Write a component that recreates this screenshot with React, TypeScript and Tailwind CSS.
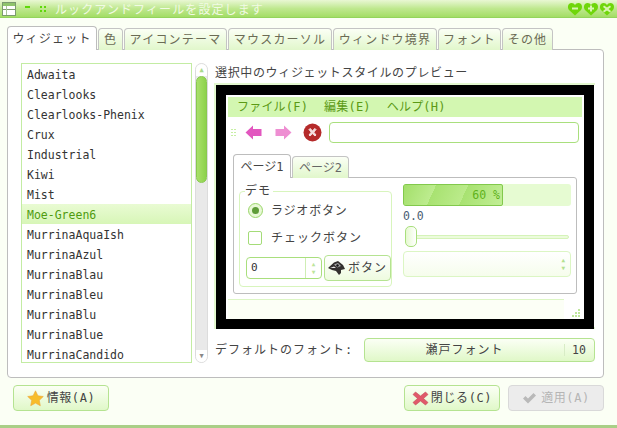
const themes = [
  'Adwaita',
  'Clearlooks',
  'Clearlooks-Phenix',
  'Crux',
  'Industrial',
  'Kiwi',
  'Mist',
  'Moe-Green6',
  'MurrinaAquaIsh',
  'MurrinaAzul',
  'MurrinaBlau',
  'MurrinaBleu',
  'MurrinaBlu',
  'MurrinaBlue',
  'MurrinaCandido',
];

const tabs = [
  { label: '色', width: 'w-[25px]' },
  { label: 'アイコンテーマ', width: 'w-[103px]' },
  { label: 'マウスカーソル', width: 'w-[104px]' },
  { label: 'ウィンドウ境界', width: 'w-[104px]' },
  { label: 'フォント', width: 'w-[63px]' },
  { label: 'その他', width: 'w-[51px]' },
];

const fontStack = "font-['DejaVu_Sans_Mono','Noto_Sans_CJK_JP',monospace]";

function Heart({ mark }: { mark: string }) {
  return (
    <svg width="16" height="14" viewBox="0 0 15 14">
      <path d="M7.5 13.5 1.5 8C-.5 5.5.5 1 4 1c1.6 0 2.8.8 3.5 2C8.2 1.8 9.4 1 11 1c3.5 0 4.5 4.5 2.5 7z" fill="#6fd60a" />
      {mark === 'min' && <rect x="4.5" y="5.5" width="6" height="2" fill="#d8f5b0" />}
      {mark === 'max' && <path d="M6.5 3.5h2v2h2v2h-2v2h-2v-2h-2v-2h2z" fill="#d8f5b0" />}
      {mark === 'close' && <path d="m4.5 3.5 3 2 3-2 1 1.5-2.500 2 2.500 2-1 1.500-3-2-3 2-1-1.500 2.500-2-2.500-2z" fill="#d8f5b0" />}
    </svg>
  );
}

function Star() {
  return (
    <svg width="17" height="17" viewBox="0 0 17 17">
      <path d="m8.500.8 2.400 5 5.400.7-4 3.800 1 5.400-4.800-2.600-4.800 2.600 1-5.400-4-3.800 5.400-.7z" fill="#f7bd2b" stroke="#eda53a" strokeWidth="0.6" />
    </svg>
  );
}

function CloseMark() {
  return (
    <svg width="17" height="15" viewBox="0 0 17 15">
      <path d="M1 3.500 3.500 1 8.500 5 13.500 1 16 3.500 11.500 7.500 16 11.500 13.500 14 8.500 10 3.500 14 1 11.500 5.500 7.500z" fill="#e0596a" stroke="#c44a55" strokeWidth="0.6" />
    </svg>
  );
}

function CheckMark() {
  return (
    <svg width="15" height="12" viewBox="0 0 15 12">
      <path d="M1 6.500 3.500 4 6 6.500 11.500 1 14 3.500 6 11.500z" fill="#b9b9b9" />
    </svg>
  );
}

function ToolArrow({ flip, light }: { flip?: boolean; light?: boolean }) {
  return (
    <svg width="17" height="15" viewBox="0 0 17 15" className={flip ? 'scale-x-[-1]' : ''}>
      <path d="M.5 7.500 8 .5v3.500h8.500v7H8v3.500z" fill={light ? '#ee8ed2' : '#e257bf'} />
    </svg>
  );
}

function StopIcon() {
  return (
    <svg width="19" height="19" viewBox="0 0 19 19">
      <circle cx="9.500" cy="9.500" r="9" fill="#b52a2a" />
      <path d="m6 6.500 1-1 2.500 2.200L12 5.500l1 1-2.200 2.700 2.200 2.800-1 1-2.500-2.300L7 13l-1-1 2.200-2.800z" fill="#f5dede" stroke="#f5dede" />
    </svg>
  );
}

function MascotIcon() {
  return (
    <svg width="17" height="16" viewBox="0 0 17 16">
      <path d="M0 8 6 2.500 10 1l5 4 2 4-4 1 0 3-2 2-3-4-4-1z" fill="#33302e" />
      <path d="M6 4.500 10 3l3 3-3.500 1.500z" fill="#a8a8a8" />
      <path d="m2 8 4-1.500L8 8z" fill="#e8e8e8" />
      <circle cx="9.500" cy="5.500" r="1.200" fill="#111" />
    </svg>
  );
}

function GreenButton({ children, className }: { children: React.ReactNode; className?: string }) {
  return (
    <div className={`flex items-center justify-center rounded-[4px] border border-[#b5e391] bg-gradient-to-b from-[#fbfff5] to-[#e0f8c8] text-[#444] ${className ?? ''}`}>
      {children}
    </div>
  );
}

function TitleBar() {
  return (
    <div className="flex h-[18px] shrink-0 items-center border-b border-[#93d45c] bg-gradient-to-b from-[#e9f7d3] via-[#bfe88f] to-[#a3dd65] pl-[2px] pr-[2px]">
      <div className="relative h-[14px] w-[14px] border border-[#7b9a70] bg-white">
        <div className="h-[3px] bg-[#8fc46c]" />
        <div className="absolute left-0 right-0 top-[6px] h-px bg-[#7fa06d]" />
        <div className="absolute bottom-0 left-[3px] top-[3px] w-px bg-[#a9c59a]" />
      </div>
      <div className="ml-[9px] mb-[4px] h-[2px] w-[5px] bg-[#5fd80a]" />
      <div className="ml-[10px] grid grid-cols-2 gap-[2px]">
        <div className="h-[2px] w-[2px] bg-[#5fd80a]" />
        <div className="h-[2px] w-[2px] bg-[#5fd80a]" />
        <div className="h-[2px] w-[2px] bg-[#5fd80a]" />
        <div className="h-[2px] w-[2px] bg-[#5fd80a]" />
      </div>
      <span className="ml-[9px] pt-[3px] text-[12px] leading-none tracking-[1.1px] text-[#f1fae4]">ルックアンドフィールを設定します</span>
      <div className="ml-auto flex">
        <Heart mark="min" />
        <Heart mark="max" />
        <Heart mark="close" />
      </div>
    </div>
  );
}

function TabStrip() {
  return (
    <div className="relative z-10 ml-[7px] flex h-[24px] items-end gap-px">
      <div className="flex h-[24px] w-[90px] items-center justify-center rounded-t-[4px] border border-b-0 border-[#bdbdbd] bg-white text-[12px] tracking-[1.2px] text-[#444]">
        ウィジェット
      </div>
      {tabs.map((t) => (
        <div
          key={t.label}
          className={`flex h-[22px] items-center justify-center rounded-t-[4px] border border-b-0 border-[#c4c4c4] bg-gradient-to-b from-[#fbfff5] to-[#e1f7cb] text-[12px] tracking-[1.200px] whitespace-nowrap text-[#6b6b55] ${t.width}`}
        >
          {t.label}
        </div>
      ))}
    </div>
  );
}

function ThemeList() {
  return (
    <div className="flex h-[300px] w-[171px] shrink-0 flex-col overflow-hidden border border-[#c3eca3] bg-white">
      {themes.map((name) => (
        <div
          key={name}
          className={`flex h-[20px] shrink-0 items-center px-[5px] pt-[3px] text-[11.500px] font-medium ${
            name === 'Moe-Green6'
              ? 'bg-gradient-to-b from-[#e9fbd3] to-[#d7f6b7] text-[#4f9b10]'
              : 'text-[#333]'
          }`}
        >
          {name}
        </div>
      ))}
    </div>
  );
}

function ListScrollbar() {
  return (
    <div className="ml-[3px] flex h-[300px] w-[13px] shrink-0 flex-col rounded-full border border-[#dcdcdc] bg-[#e9e9e9]">
      <div className="flex h-[12px] shrink-0 items-center justify-center rounded-t-full bg-white text-[7px] leading-none text-[#a9d98c]">▲</div>
      <div className="h-[107px] rounded-[6px] border border-[#88c94f] bg-gradient-to-r from-[#a9e06a] to-[#8dd24b]" />
      <div className="flex-1" />
      <div className="flex h-[12px] shrink-0 items-center justify-center rounded-b-full bg-white text-[7px] leading-none text-[#888]">▼</div>
    </div>
  );
}

function DemoPanel() {
  return (
    <div className="mx-[7px] mt-[7px] flex flex-col">
      <div className="relative z-10 flex h-[24px] items-end gap-px">
        <div className="flex h-[24px] w-[58px] items-center justify-center rounded-t-[4px] border border-b-0 border-[#bdbdbd] bg-white text-[12px] text-[#444]">
          ページ1
        </div>
        <div className="flex h-[22px] w-[57px] items-center justify-center rounded-t-[4px] border border-b-0 border-[#c4c4c4] bg-gradient-to-b from-[#fbfff5] to-[#e1f7cb] text-[12px] text-[#666]">
          ページ2
        </div>
      </div>
      <div className="-mt-px flex h-[117px] gap-[11px] rounded-b-[3px] rounded-tr-[3px] border border-[#bdbdbd] bg-white pl-[5px] pt-[6px]">
        <div className="relative mt-[7px] h-[96px] w-[153px] shrink-0 rounded-[4px] border border-[#d8f5bd] pl-[6px]">
          <span className="absolute -top-[8px] left-[5px] bg-white pr-[2px] text-[12px] leading-[14px] tracking-[1px] text-[#444]">デモ</span>
          <div className="mt-[4px] flex h-[28px] items-center gap-[8px] pl-[2px]">
            <div className="flex h-[15px] w-[15px] items-center justify-center rounded-full border border-[#9ad66a] bg-[#e8f8d6]">
              <div className="h-[7px] w-[7px] rounded-full bg-[#5e9c38]" />
            </div>
            <span className="pt-px text-[12px] tracking-[0.8px] text-[#444]">ラジオボタン</span>
          </div>
          <div className="flex h-[27px] items-center gap-[9px] pl-[2px]">
            <div className="h-[14px] w-[14px] rounded-[2px] border border-[#a4dc78] bg-white" />
            <span className="pt-px text-[12px] tracking-[1px] text-[#444]">チェックボタン</span>
          </div>
          <div className="mt-[4px] flex h-[26px] items-center gap-[2px]">
            <div className="flex h-[22px] w-[76px] overflow-hidden rounded-[4px] border border-[#a9df7d]">
              <div className="flex-1 pl-[4px] text-[11px] leading-[20px] font-medium text-[#333]">0</div>
              <div className="flex w-[16px] flex-col items-center justify-center gap-[2px] border-l border-[#cfeeb4] text-[6px] leading-none text-[#bde59c]">
                <span>▲</span>
                <span>▼</span>
              </div>
            </div>
            <GreenButton className="h-[26px] w-[67px] gap-[3px] border-[#b5e391] from-white to-[#eefbdf] text-[12px] tracking-[1px]">
              <MascotIcon />
              ボタン
            </GreenButton>
          </div>
        </div>
        <div className="flex w-[168px] flex-col">
          <div className="h-[22px] overflow-hidden rounded-[3px] bg-[#e6fbd2]">
            <div className="flex h-full w-[100px] items-center justify-end rounded-[2px] border border-[#82c94c] bg-[linear-gradient(115deg,#a3df6a_0%,#bdec8f_30%,#a8e271_30%,#bbeb8b_60%,#a8e271_60%,#c2ee96_100%)] pr-[2px] pt-px text-[11.500px] font-medium text-[#5fb21c]">
              60 %
            </div>
          </div>
          <div className="mt-px pt-px text-[11.500px] leading-[16px] font-medium text-[#4a5d73]">0.0</div>
          <div className="relative mt-[2px] flex h-[21px] items-center pl-[2px] pr-[2px]">
            <div className="h-[4px] flex-1 rounded-full border border-[#d5f3b9] bg-[#ecfbdc]" />
            <div className="absolute left-[2px] top-0 h-[21px] w-[12px] rounded-[5px] border border-[#a9df7d] bg-gradient-to-r from-[#e6f9d0] to-white" />
          </div>
          <div className="mt-[4px] flex h-[26px] items-center justify-end rounded-[4px] border border-[#dcf6c4] bg-gradient-to-b from-white to-[#f6fdec] pr-[5px]">
            <div className="flex flex-col items-center gap-[2px] text-[6px] leading-none text-[#b3e08f]">
              <span>▲</span>
              <span>▼</span>
            </div>
          </div>
        </div>
      </div>
    </div>
  );
}

function Preview() {
  return (
    <div className="h-[246px] border-2 border-r-0 border-[#e3f8cf] bg-white">
      <div className="h-[244px] w-[378px] border-[10px] border-black bg-white">
        <div className="flex h-full flex-col">
          <div className="mx-[2px] mt-[2px] flex h-[20px] shrink-0 items-center gap-[16px] bg-[#d3f7b1] pl-[9px] text-[12px] tracking-[0.2px] text-[#5b9a15]">
            <span>ファイル(F)</span>
            <span>編集(E)</span>
            <span>ヘルプ(H)</span>
          </div>
          <div className="flex h-[30px] shrink-0 items-center pl-[5px] pt-px">
            <div className="mr-[9px] grid grid-cols-2 gap-x-px gap-y-[2px]">
              {Array.from({ length: 6 }).map((_, i) => (
                <div key={i} className="h-px w-[2px] bg-[#c6efa3]" />
              ))}
            </div>
            <ToolArrow />
            <div className="w-[13px]" />
            <ToolArrow flip light />
            <div className="w-[11px]" />
            <StopIcon />
            <div className="ml-[7px] h-[21px] w-[250px] rounded-[4px] border border-[#a9df7d] bg-white" />
          </div>
          <DemoPanel />
          <div className="mx-[2px] mt-[5px] flex min-h-0 flex-1">
            <div className="flex-1 border-t border-[#dcf6c4] bg-[#fcfff6]" />
            <div className="relative w-[18px]">
              <div className="absolute bottom-[2px] right-[2px] grid grid-cols-4 gap-px">
                {[0, 0, 0, 1, 0, 0, 1, 1, 0, 1, 1, 1].map((on, i) => (
                  <div key={i} className={`h-[2px] w-[2px] ${on ? 'bg-[#bfe79c]' : ''}`} />
                ))}
              </div>
            </div>
          </div>
        </div>
      </div>
    </div>
  );
}

export default function App() {
  return (
    <div className={`flex h-[428px] w-[617px] flex-col overflow-hidden border-b-[3px] border-[#a9cf87] bg-[#fbfff5] ${fontStack}`}>
      <TitleBar />
      <div className="mt-[8px]">
        <TabStrip />
        <div className="-mt-px ml-[7px] flex h-[329px] w-[597px] rounded-b-[4px] rounded-tr-[4px] border border-[#bdbdbd] bg-white pl-[13px] pt-[13px]">
          <ThemeList />
          <ListScrollbar />
          <div className="ml-[6px] flex w-[381px] flex-col">
            <div className="flex h-[20px] items-center pl-px text-[12px] tracking-[0.65px] whitespace-nowrap text-[#444]">
              選択中のウィジェットスタイルのプレビュー
            </div>
            <Preview />
            <div className="mt-[9px] flex items-center">
              <span className="w-[150px] pl-px text-[12px] tracking-[1px] whitespace-nowrap text-[#444]">デフォルトのフォント:</span>
              <GreenButton className="h-[24px] w-[231px] text-[12px] tracking-[1px]">
                <span className="flex-1 text-center">瀬戸フォント</span>
                <span className="w-[30px] border-l border-[#d8ecc6] pl-[7px] text-[11.500px] leading-[12px] font-medium tracking-normal">10</span>
              </GreenButton>
            </div>
          </div>
        </div>
        <div className="mt-[7px] flex px-[13px]">
          <GreenButton className="h-[26px] w-[96px] gap-[3px] text-[12px] tracking-[0.6px]">
            <Star />
            情報(A)
          </GreenButton>
          <GreenButton className="ml-auto h-[26px] w-[96px] gap-[2px] text-[12px] tracking-[0.6px]">
            <CloseMark />
            閉じる(C)
          </GreenButton>
          <div className="ml-[8px] flex h-[26px] w-[96px] items-center justify-center gap-[4px] rounded-[4px] border border-[#d9d9d9] bg-[#ececec] text-[12px] tracking-[0.6px] text-[#b5b5b5]">
            <CheckMark />
            適用(A)
          </div>
        </div>
      </div>
    </div>
  );
}
